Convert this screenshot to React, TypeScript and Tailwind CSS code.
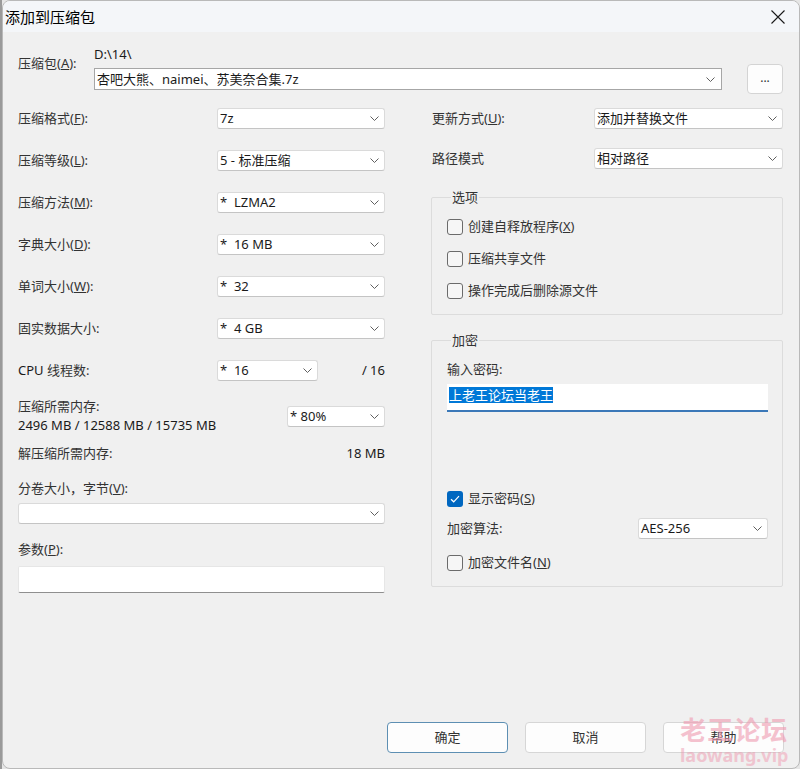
import React from "react";

const Chevron = () => (
  <svg width="9" height="5" viewBox="0 0 9 5" className="shrink-0">
    <path d="M0.5 0.5 L4.5 4.5 L8.5 0.5" fill="none" stroke="#5f5f5f" strokeWidth="1" />
  </svg>
);

function Combo({ value, className = "" }: { value: string; className?: string }) {
  return (
    <div
      className={`flex items-center justify-between h-[21px] bg-white border border-[#dadada] border-b-[#c4c4c4] rounded-[3px] pl-[2px] pr-[5px] text-[#1a1a1a] ${className}`}
    >
      <span className="whitespace-pre leading-[19px]">{value}</span>
      <Chevron />
    </div>
  );
}

function Check({ checked = false, label }: { checked?: boolean; label: React.ReactNode }) {
  return (
    <div className="flex items-center h-[20px]">
      {checked ? (
        <div className="w-[16px] h-[16px] rounded-[3px] bg-[#0067c0] flex items-center justify-center">
          <svg width="10" height="8" viewBox="0 0 10 8">
            <path d="M1 4.2 L3.7 6.8 L9 1.2" fill="none" stroke="white" strokeWidth="1.2" />
          </svg>
        </div>
      ) : (
        <div className="w-[16px] h-[16px] rounded-[3px] border border-[#6b6b6b] bg-[#f6f6f6]" />
      )}
      <span className="ml-[5px] text-[#333]">{label}</span>
    </div>
  );
}

function Row({ label, value }: { label: React.ReactNode; value: string }) {
  return (
    <div className="flex items-center justify-between h-[21px]">
      <span className="text-[#333]">{label}</span>
      <Combo value={value} className="w-[168px]" />
    </div>
  );
}

export default function App() {
  return (
    <div className="w-[800px] h-[769px] flex bg-[#e6e6e6] font-['Noto_Sans','Noto_Sans_CJK_SC',sans-serif] text-[13px] overflow-hidden">
      <div className="w-[2px] h-full bg-[#9a9a9a]" />
      <div className="relative w-[798px] h-[769px] rounded-lg border border-[#b9b9b9] bg-[#f0f0f0] overflow-hidden flex flex-col">
        {/* Title bar */}
        <div className="h-[31px] shrink-0 flex items-center justify-between bg-[#f4f6f9] pl-[2px]">
          <span className="text-[15px] text-black leading-[20px]">添加到压缩包</span>
          <div className="w-[42px] h-full flex items-center justify-center">
            <svg width="14" height="14" viewBox="0 0 14 14">
              <path d="M0.5 0.5 L13.5 13.5 M13.5 0.5 L0.5 13.5" stroke="#1a1a1a" strokeWidth="1.1" />
            </svg>
          </div>
        </div>

        {/* Content */}
        <div className="flex-1 flex flex-col pl-[15px] pr-[15px] pb-[15px]">
          {/* Archive row */}
          <div className="flex mt-[13px]">
            <span className="w-[76px] pt-[9px] leading-[18px] text-[#333]">
              压缩包(<u>A</u>):
            </span>
            <div className="flex flex-col">
              <span className="leading-[18px] text-[#1a1a1a]">D:\14\</span>
              <div className="flex items-center mt-[1px]">
                <div className="w-[628px] h-[22px] bg-white border border-[#a6a6a6] flex items-center justify-between pl-[2px] pr-[6px] text-[#1a1a1a]">
                  <span className="leading-[20px]">杏吧大熊、naimei、苏美奈合集.7z</span>
                  <Chevron />
                </div>
                <div className="ml-[25px] w-[36px] h-[30px] bg-[#fdfdfd] border border-[#d4d4d4] rounded-[4px] flex items-center justify-center text-[#333] text-[12px] leading-none pb-[3px]">
                  ...
                </div>
              </div>
            </div>
          </div>

          {/* Two columns */}
          <div className="flex mt-[14px]">
            {/* Left */}
            <div className="w-[367px] flex flex-col">
              <div className="flex flex-col gap-[21px]">
                <Row label={<>压缩格式(<u>F</u>):</>} value="7z" />
                <Row label={<>压缩等级(<u>L</u>):</>} value="5 - 标准压缩" />
                <Row label={<>压缩方法(<u>M</u>):</>} value="*  LZMA2" />
                <Row label={<>字典大小(<u>D</u>):</>} value="*  16 MB" />
                <Row label={<>单词大小(<u>W</u>):</>} value="*  32" />
                <Row label="固实数据大小:" value="*  4 GB" />
                <div className="flex items-center h-[21px]">
                  <span className="w-[199px] text-[#1a1a1a]">CPU <span className="text-[#333]">线程数:</span></span>
                  <Combo value="*  16" className="w-[101px]" />
                  <span className="flex-1 text-right text-[#1a1a1a]">/ 16</span>
                </div>
              </div>

              <div className="flex items-center justify-between mt-[16px]">
                <div className="flex flex-col leading-[19px]">
                  <span className="text-[#333]">压缩所需内存:</span>
                  <span className="text-[#1a1a1a]">2496 MB / 12588 MB / 15735 MB</span>
                </div>
                <Combo value="* 80%" className="w-[98px]" />
              </div>

              <div className="flex justify-between mt-[9px] leading-[19px]">
                <span className="text-[#333]">解压缩所需内存:</span>
                <span className="text-[#1a1a1a]">18 MB</span>
              </div>

              <span className="mt-[16px] leading-[19px] text-[#333]">
                分卷大小，字节(<u>V</u>):
              </span>
              <Combo value="" className="mt-[5px] w-full" />

              <span className="mt-[16px] leading-[19px] text-[#333]">
                参数(<u>P</u>):
              </span>
              <div className="mt-[7px] h-[27px] bg-white border border-[#e6e6e6] border-b-[#8f8f8f] rounded-[2px]" />
            </div>

            {/* Right */}
            <div className="ml-[46px] w-[352px] flex flex-col">
              <div className="flex flex-col gap-[19px] pl-[1px]">
                <div className="flex items-center justify-between h-[21px]">
                  <span className="text-[#333]">更新方式(<u>U</u>):</span>
                  <Combo value="添加并替换文件" className="w-[189px]" />
                </div>
                <div className="flex items-center justify-between h-[21px]">
                  <span className="text-[#333]">路径模式</span>
                  <Combo value="相对路径" className="w-[189px]" />
                </div>
              </div>

              <fieldset className="mt-[19px] border border-[#dcdcdc] rounded-[2px] pl-[15px] pb-[13px]">
                <legend className="ml-[4px] px-[1px] leading-[18px] text-[#333]">选项</legend>
                <div className="flex flex-col gap-[12px] mt-[11px]">
                  <Check label={<>创建自释放程序(<u>X</u>)</>} />
                  <Check label="压缩共享文件" />
                  <Check label="操作完成后删除源文件" />
                </div>
              </fieldset>

              <fieldset className="mt-[16px] border border-[#dcdcdc] rounded-[2px] pl-[15px] pr-[14px] pb-[13px]">
                <legend className="ml-[4px] px-[1px] leading-[18px] text-[#333]">加密</legend>
                <div className="mt-[11px] leading-[18px] text-[#333]">输入密码:</div>
                <div className="mt-[6px] h-[28px] bg-white border-b-[2px] border-[#3b78b8] pl-[2px] pt-[2px]">
                  <span className="bg-[#0078d7] text-white leading-[16px] inline-block">上老王论坛当老王</span>
                </div>
                <div className="mt-[77px]">
                  <Check checked label={<>显示密码(<u>S</u>)</>} />
                </div>
                <div className="mt-[9px] flex items-center justify-between h-[21px]">
                  <span className="text-[#333]">加密算法:</span>
                  <Combo value="AES-256" className="w-[130px]" />
                </div>
                <div className="mt-[14px]">
                  <Check label={<>加密文件名(<u>N</u>)</>} />
                </div>
              </fieldset>
            </div>
          </div>

          {/* Buttons */}
          <div className="mt-auto flex justify-end gap-[17px]">
            <div className="w-[121px] h-[31px] bg-[#fdfdfd] border border-[#5d8fb3] rounded-[4px] flex items-center justify-center text-[#333]">
              确定
            </div>
            <div className="w-[121px] h-[31px] bg-[#fdfdfd] border border-[#d6d6d6] rounded-[4px] flex items-center justify-center text-[#333]">
              取消
            </div>
            <div className="w-[121px] h-[31px] bg-[#fdfdfd] border border-[#d6d6d6] rounded-[4px] flex items-center justify-center text-[#333]">
              帮助
            </div>
          </div>
        </div>

        {/* Watermark */}
        <div className="absolute left-[677px] top-[714px] flex flex-col items-center pointer-events-none">
          <span className="text-[26px] leading-[30px] font-bold text-[#ef9ab0] opacity-60 tracking-[1px]">老王论坛</span>
          <span className="text-[18px] leading-[20px] font-bold text-[#ef9ab0] opacity-50">laowang.vip</span>
        </div>
      </div>
    </div>
  );
}
